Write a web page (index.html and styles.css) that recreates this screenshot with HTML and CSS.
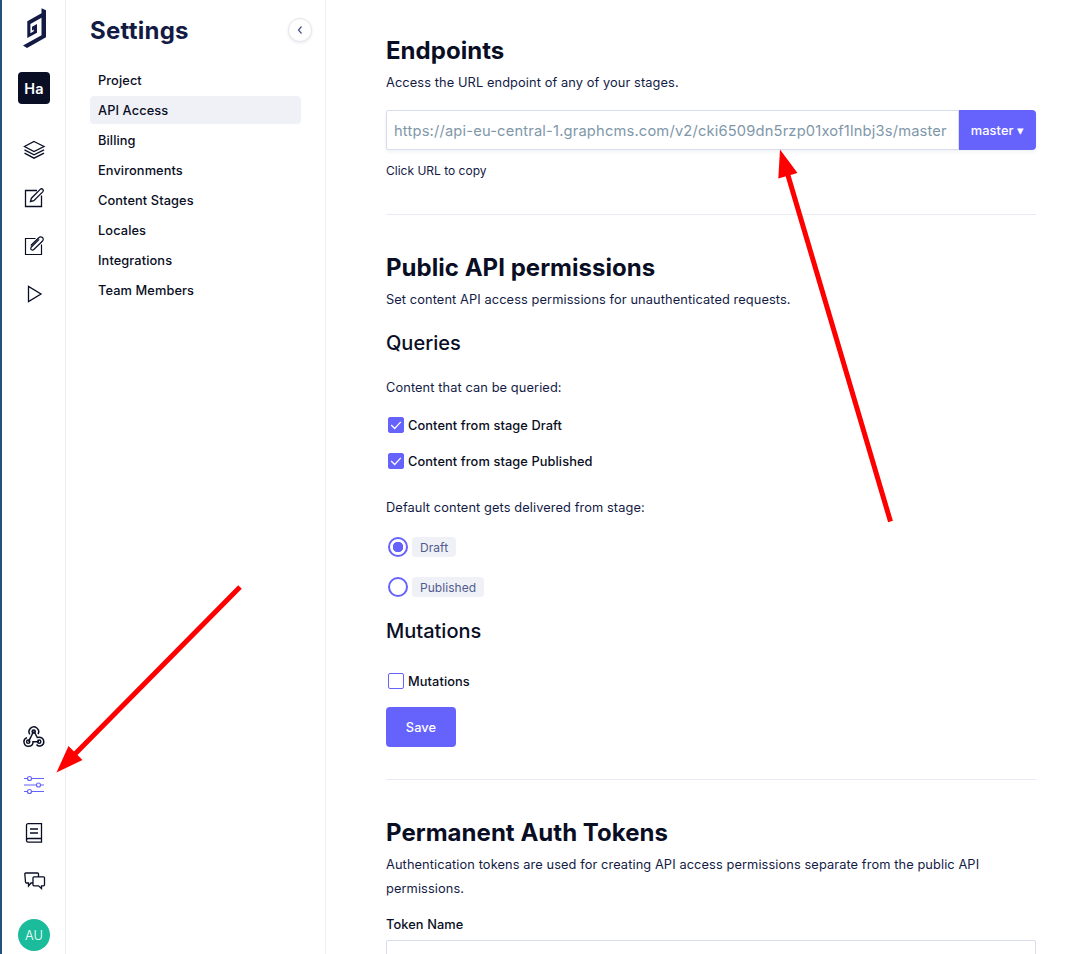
FILE: index.html
```html
<!DOCTYPE html>
<html lang="en">
<head>
<meta charset="utf-8">
<title>Settings</title>
<link rel="stylesheet" href="styles.css">
</head>
<body>
<div class="app">
  <nav class="rail">
    <svg class="logo" viewBox="0 0 32 40"><path d="M23.500 .3 28 2.300V29.300L9 40 5 37.600 23.500 27.200V9.700L12.400 16V25.200L15.700 23.300V21.600L14 22.500V18.800L19 16V24.700L9.300 30V13.300L23.500 5.300z"/></svg>
    <div class="badge">Ha</div>
    <div class="icons">
      <svg class="icon" viewBox="0 0 24 24"><path d="M12 3.500 22 8.500 12 13.500 2.500 8.500zM2.500 11.800 12 16.800l10-5M2.500 15.200 12 20.200l10-5"/></svg>
      <svg class="icon" viewBox="0 0 24 24"><path d="M15 4.500H3.500v16h16V9.500M8.500 15.500l.9-3.300L18.200 3.400c1.700-1.700 4.200.7 2.500 2.500L11.800 14.600z"/></svg>
      <svg class="icon icon-clip" viewBox="0 0 24 24"><path d="M13.500 4.500H3.500v16h16V10.500M8.800 11.500l7.700-7.500c2.800-2.800 6.500.5 3.800 3.300l-8.200 8c-2 2-4.600-.3-2.700-2.300l7.800-7.600"/></svg>
      <svg class="icon" viewBox="0 0 24 24"><path d="M6.500 4.500v15L19 12z"/></svg>
    </div>
    <div class="icons icons-bottom">
      <svg class="icon icon-hook" viewBox="0 0 24 24"><path d="M7.800 9.300a4.800 4.800 0 1 1 8.200-.2M11.500 6.500 8.500 12.800M12 6.500l3.300 6c4-1 6.500 1.200 6.500 4.200 0 4.200-5 5.800-7.300 2.800M8.500 12.600l-2 4.100M5 12.600a4.500 4.500 0 1 0 6 4.100h6"/><circle cx="11.700" cy="6.500" r="1.600"/><circle cx="6.200" cy="16.700" r="1.600"/><circle cx="17.200" cy="16.700" r="1.600"/></svg>
      <svg class="icon icon-active" viewBox="0 0 24 24"><path d="M2 5.500h3.500M9.500 5.500H22M2 12h12.500M18.500 12H22M2 18.500h3.500M9.500 18.500H22"/><circle cx="7.500" cy="5.500" r="2"/><circle cx="16.500" cy="12" r="2"/><circle cx="7.500" cy="18.500" r="2"/></svg>
      <svg class="icon" viewBox="0 0 24 24"><path d="M19.500 17.500V2.700H6a1.500 1.500 0 0 0-1.500 1.500v15.300c0 1 .7 1.700 1.700 1.700h13.300v-3.700H6.200a1.700 1.700 0 0 0-1.700 1.700M8 8h8M8 12h8"/></svg>
      <svg class="icon" viewBox="0 0 24 24"><path d="M10.500 14H9L6.500 17v-3h-2a1 1 0 0 1-1-1l-.7-8a1 1 0 0 1 1-1H15.500a1 1 0 0 1 1 1v2.800M12 7.800h9.500a1 1 0 0 1 1 1v7a1 1 0 0 1-1 1h-2v2.700l-3-2.700H12a1 1 0 0 1-1-1v-7a1 1 0 0 1 1-1z"/></svg>
    </div>
    <div class="avatar">AU</div>
  </nav>
  <aside class="sidebar">
    <header class="side-head">
      <h1>Settings</h1>
      <button class="collapse"><svg viewBox="0 0 8 10"><path d="M5.500 1.500 2.500 5l3 3.500"/></svg></button>
    </header>
    <ul class="menu">
      <li>Project</li>
      <li class="current">API Access</li>
      <li>Billing</li>
      <li>Environments</li>
      <li>Content Stages</li>
      <li>Locales</li>
      <li>Integrations</li>
      <li>Team Members</li>
    </ul>
  </aside>
  <main class="content">
    <section class="endpoints">
      <h2>Endpoints</h2>
      <p>Access the URL endpoint of any of your stages.</p>
      <div class="url-row">
        <div class="url">https://api-eu-central-1.graphcms.com/v2/cki6509dn5rzp01xof1lnbj3s/master</div>
        <button class="branch">master ▾</button>
      </div>
      <p class="hint">Click URL to copy</p>
    </section>
    <section class="permissions">
      <h2>Public API permissions</h2>
      <p>Set content API access permissions for unauthenticated requests.</p>
      <h3>Queries</h3>
      <p class="label-line">Content that can be queried:</p>
      <div class="checks">
        <label class="check"><span class="box checked"><svg viewBox="0 0 16 16"><path d="m2.500 8 4 4 7-7.500"/></svg></span><span class="check-text">Content from stage Draft</span></label>
        <label class="check"><span class="box checked"><svg viewBox="0 0 16 16"><path d="m2.500 8 4 4 7-7.500"/></svg></span><span class="check-text">Content from stage Published</span></label>
      </div>
      <p class="stage-line">Default content gets delivered from stage:</p>
      <div class="radios">
        <label class="choice"><span class="radio selected"></span><span class="tag">Draft</span></label>
        <label class="choice"><span class="radio"></span><span class="tag">Published</span></label>
      </div>
      <h3 class="mutations">Mutations</h3>
      <label class="check"><span class="box"></span><span class="check-text">Mutations</span></label>
      <button class="save">Save</button>
    </section>
    <section class="tokens">
      <h2>Permanent Auth Tokens</h2>
      <p>Authentication tokens are used for creating API access permissions separate from the public API permissions.</p>
      <div class="field-label">Token Name</div>
      <div class="field"></div>
    </section>
  </main>
  <svg class="arrows" viewBox="0 0 1073 954">
    <path class="shaft" d="M890.500 521.500 787 172M240 587 74 755"/>
    <path class="head" d="M780 149.500 797.500 173 778.300 178.500zM56.500 772.500 68.500 746 82.500 760z"/>
  </svg>
</div>
</body>
</html>
```

FILE: styles.css
```css
* { box-sizing: border-box; margin: 0; padding: 0; }
body { height: 954px; overflow: hidden; background: #fff; font-family: Inter, "Liberation Sans", sans-serif; font-size: 12.800px; letter-spacing: .1px; line-height: 24px; color: #131b45; }
button { border: 0; font: inherit; letter-spacing: inherit; }
.app { position: relative; display: flex; height: 954px; overflow: hidden; border-left: 2px solid #24507b; }
.rail { width: 64px; flex: none; padding: 8px 0 3px 16px; border-right: 1px solid #eeeef2; display: flex; flex-direction: column; }
.logo { width: 32px; height: 40px; fill: #131b45; }
.badge { width: 32px; height: 32px; margin-top: 24px; border-radius: 4px; background: #090e24; color: #fff; font-size: 14.500px; font-weight: 600; line-height: 33px; text-align: center; }
.icons { display: flex; flex-direction: column; gap: 24px; margin-top: 34px; padding-left: 4px; }
.icons-bottom { margin-top: auto; }
.icon { width: 24px; height: 24px; fill: none; stroke: #090e24; stroke-width: 1.300; }
.icon-hook { stroke-width: 1.500; }
.icon-clip { stroke-width: 1.200; }
.icon-active { stroke: #6663fd; stroke-width: 1.150; }
.avatar { width: 32px; height: 32px; margin-top: 26px; border-radius: 50%; background: #1abc9c; color: #fff; font-size: 12.800px; font-weight: 300; line-height: 33px; text-align: center; }
.sidebar { width: 260px; flex: none; padding: 14px 13px 0 24px; border-right: 1px solid #f0f0f4; }
.side-head { display: flex; align-items: center; justify-content: space-between; height: 32px; }
h1 { font-size: 24px; line-height: 32px; font-weight: 700; padding-top: 1px; letter-spacing: .250px; }
.collapse { width: 24px; height: 24px; border: 1px solid #e6e6ec; border-radius: 50%; background: #fff; box-shadow: 0 1px 3px rgba(20, 27, 69, .1); display: grid; place-items: center; }
.collapse svg { width: 8px; height: 10px; fill: none; stroke: #454f86; stroke-width: 1.200; }
.menu { list-style: none; display: grid; gap: 2px; margin-top: 20px; width: 211px; }
.menu li { height: 28px; padding: 0 8px; border-radius: 4px; line-height: 29px; font-weight: 500; color: #090e24; }
.menu .current { background: #f0f1f7; }
.content { width: 650px; margin-left: 60px; flex: none; }
section + section { border-top: 1px solid #e8ebf3; }
h2 { font-size: 24px; line-height: 32px; font-weight: 700; color: #090e24; letter-spacing: .030px; }
h3 { font-size: 20px; line-height: 28px; font-weight: 470; color: #090e24; letter-spacing: 0; }
.endpoints { height: 214px; padding-top: 35px; }
.endpoints p, .permissions h2 + p, .tokens p { margin-top: 4px; }
.url-row { display: flex; height: 40px; margin-top: 15px; border-radius: 4px; box-shadow: 0 2px 4px rgba(20, 27, 69, .06); }
.url { flex: 1; border: 1px solid #d8dcee; border-radius: 2px 0 0 2px; padding-left: 7px; font-size: 14.700px; letter-spacing: .174px; line-height: 41px; color: #8097a9; white-space: nowrap; }
.branch { width: 77px; padding-top: 1px; border-radius: 0 4px 4px 0; background: #6663fd; color: #fff; font-weight: 500; }
.endpoints .hint { margin-top: 9px; font-size: 12px; letter-spacing: 0; }
.permissions { height: 565px; padding-top: 37px; }
.permissions h2 + p + h3 { margin-top: 17px; }
.label-line { margin-top: 19px; }
.checks { display: grid; gap: 12px; margin-top: 13px; }
.check { display: flex; align-items: center; height: 24px; padding-left: 2px; gap: 4px; font-weight: 500; color: #090e24; }
.check-text { padding-top: 2px; }
.box { width: 16px; height: 16px; border: 1px solid #6663fd; border-radius: 2px; }
.checked { display: grid; background: #6663fd; }
.box svg { width: 14px; height: 14px; fill: none; stroke: #fff; stroke-width: 1.400; }
.stage-line { margin-top: 23px; }
.radios { display: grid; gap: 20px; margin-top: 17px; }
.choice { display: flex; gap: 4px; height: 20px; padding-left: 2px; }
.radio { width: 20px; height: 20px; border: 2px solid #6663fd; border-radius: 50%; }
.selected { background: radial-gradient(circle, #6663fd 5px, #fff 5.500px); }
.tag { height: 20px; padding: 0 8px; border-radius: 4px; background: #f0f1f7; color: #515b8e; font-size: 12px; letter-spacing: .050px; line-height: 21px; }
.mutations { margin: 20px 0 24px; }
.save { display: block; width: 70px; height: 40px; margin-top: 14px; padding-top: 1px; border-radius: 4px; background: #6663fd; color: #fff; font-weight: 500; }
.tokens { padding-top: 37px; }
.field-label { margin-top: 12px; font-weight: 500; color: #090e24; }
.field { height: 40px; margin-top: 3px; border: 1px solid #d8dcee; border-radius: 2px; }
.arrows { position: absolute; left: -2px; top: 0; width: 1073px; height: 954px; pointer-events: none; }
.shaft { fill: none; stroke: #f00; stroke-width: 5; }
.head { fill: #f00; }
```
